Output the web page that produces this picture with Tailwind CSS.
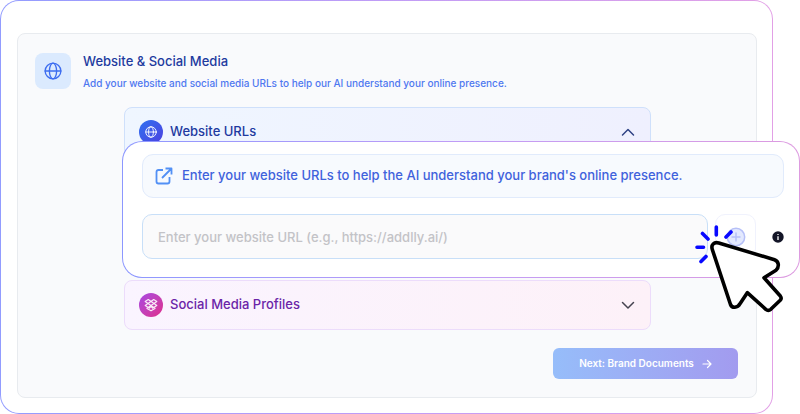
<!DOCTYPE html>
<html lang="en">
<head>
    <meta charset="UTF-8">
    <meta name="viewport" content="width=device-width, initial-scale=1.0">
    <title>Website &amp; Social Media</title>
    <script src="https://cdn.jsdelivr.net/npm/@tailwindcss/browser@4"></script>
</head>
<body class="bg-white font-['Inter',sans-serif] overflow-x-hidden">
    <main class="mr-[27px] rounded-[19px] p-px bg-linear-to-r from-[#929cff] via-[#c09cf6] to-[#e2a0e6]">
        <div class="rounded-[18px] bg-white pt-8 pr-[15px] pb-[15px] pl-4">
            <section class="rounded-lg border border-[#e8ebef] bg-[#f9fafc] pt-[19px] pr-4 pb-[18px] pl-[17px]">
                <!-- Heading -->
                <div class="flex items-start gap-3">
                    <div class="flex size-9 items-center justify-center rounded-lg bg-blue-100">
                        <svg class="size-[18px] text-[#3d6df0]" viewBox="0 0 24 24" fill="none" stroke="currentColor" stroke-width="1.8" stroke-linecap="round" stroke-linejoin="round" aria-hidden="true">
                            <circle cx="12" cy="12" r="10.5" />
                            <ellipse cx="12" cy="12" rx="4.8" ry="10.5" />
                            <path d="M1.5 12h21" />
                        </svg>
                    </div>
                    <div>
                        <h1 class="text-[13px] leading-4 font-medium text-[#1e3a9f]">Website &amp; Social Media</h1>
                        <p class="mt-[6px] text-[10px] leading-4 font-medium text-[#4f78f0]">Add your website and social media URLs to help our AI understand your online presence.</p>
                    </div>
                </div>

                <div class="mx-auto mt-4 max-w-[527px]">
                    <button type="button" aria-expanded="true" class="flex h-[50px] w-full items-center gap-[7px] rounded-lg border border-[#cfe0fb] bg-linear-to-r from-[#eff6ff] to-[#eff0fe] px-[14px]">
                        <span class="flex size-6 items-center justify-center rounded-full bg-linear-to-br from-[#2b70f0] to-[#4a3fe0]">
                            <svg class="size-3 text-white/90" viewBox="0 0 24 24" fill="none" stroke="currentColor" stroke-width="2" stroke-linecap="round" aria-hidden="true">
                                <circle cx="12" cy="12" r="10.5" />
                                <ellipse cx="12" cy="12" rx="4.8" ry="10.5" />
                                <path d="M1.5 12h21" />
                            </svg>
                        </span>
                        <span class="flex-1 text-left text-[13px] font-medium text-[#1e3a9f]">Website URLs</span>
                        <svg class="size-4 text-[#2f4384]" viewBox="0 0 16 16" fill="none" stroke="currentColor" stroke-width="1.5" stroke-linecap="round" stroke-linejoin="round" aria-hidden="true">
                            <path d="M2.500 11 8 5.500 13.500 11" />
                        </svg>
                    </button>

                    <!-- Expanded panel, wider than the accordion -->
                    <div class="relative z-10 -mt-4 -mr-[149px] -ml-0.5 rounded-[20px] bg-linear-to-r from-[#8c97ff] via-[#c09cf6] to-[#dd9be0] p-px">
                        <div class="rounded-[19px] bg-white pt-3 pr-[15px] pb-[18px] pl-[19px]">
                            <div class="flex h-11 items-center gap-[9px] rounded-[11px] border border-[#e1ebfc] bg-[#f7fafe] px-3">
                                <svg class="size-[18px] text-[#5290f5]" viewBox="0 0 18 18" fill="none" stroke="currentColor" stroke-width="1.8" stroke-linejoin="round" aria-hidden="true">
                                    <path d="M8 3H3.500Q1.500 3 1.500 5v9.500q0 2 2 2H12.500q2 0 2-2V10" />
                                    <path d="M10.500 1.500H16.500V7.500M16.500 1.500 7 11" />
                                </svg>
                                <p class="text-[13px] font-medium text-[#3f62dc]">Enter your website URLs to help the AI understand your brand's online presence.</p>
                            </div>
                            <div class="mt-4 flex items-center">
                                <input type="url" aria-label="Website URL" placeholder="Enter your website URL (e.g., https://addlly.ai/)" class="h-[45px] min-w-0 flex-1 rounded-[10px] border border-[#c8dff8] bg-[#fafafb] px-[15px] text-[13px] font-medium placeholder:text-[#c3c3c7]">
                                <button type="button" aria-label="Add URL" class="ml-[7px] flex h-[45px] w-[41px] items-center justify-center rounded-[10px] border border-[#f0f2fd] bg-white">
                                    <svg class="size-5" viewBox="0 0 20 20" fill="none" stroke="#b6c0f8" stroke-width="1.5" stroke-linecap="round" aria-hidden="true">
                                        <circle cx="10" cy="10" r="8.700" fill="#e3e9fe" />
                                        <path d="M10 6v8M6 10h8" />
                                    </svg>
                                </button>
                                <svg class="ml-4 size-3" viewBox="0 0 12 12" role="img" aria-label="Info">
                                    <circle cx="6" cy="6" r="5.700" fill="#131527" />
                                    <path d="M6 5.300V9M6 2.900v1.200" stroke="#fff" stroke-width="1.300" />
                                </svg>
                            </div>
                        </div>
                        <!-- Click cursor -->
                        <svg class="pointer-events-none absolute top-[79px] right-[10px] h-[95px] w-[100px]" viewBox="690 220 100 95" fill="none" stroke-width="3.600" stroke-linecap="round" stroke-linejoin="round" aria-hidden="true">
                            <path d="M718.800 243 774.500 259.700C779 261.200 779.500 267 776 270.300L764 277.700 780.300 296Q782 298.300 780.200 300.300L770.800 309.300Q768.300 311.300 765.800 309.300L747.300 292.700 740 303.700C737.500 308.300 732 308.300 730.500 304.500L712.300 249.500C710.800 244.700 714 241.700 718.800 243Z" fill="#fff" stroke="#000" />
                            <path d="M716.300 227V235M702.500 233.500 708 239M697 247.300H703.500M701 261.500 706 256.500M726 237 731 232" stroke="#0808ff" />
                        </svg>
                    </div>

                    <button type="button" aria-expanded="false" class="mt-0.5 flex h-[50px] w-full items-center gap-[7px] rounded-lg border border-[#ecdcfb] bg-linear-to-r from-[#faf4ff] to-[#fdf1f8] px-[14px]">
                        <span class="flex size-6 items-center justify-center rounded-full bg-linear-to-br from-[#a745e4] to-[#e0288a]">
                            <svg class="size-[14px] text-white/90" viewBox="0 0 14 14" fill="none" stroke="currentColor" stroke-width="1.2" stroke-linejoin="round" aria-hidden="true">
                                <path d="M4.300 1.500 7 3.500 4 5.500 1.200 3.500ZM9.700 1.500 12.800 3.500 10 5.500 7 3.500ZM1.200 7.500 4 5.500 7 7.500 4.300 9.500ZM12.800 7.500 10 5.500 7 7.500 9.700 9.500ZM3 9.800V10.500L7 12.800 11 10.500V9.800M7 8.500 4.800 10.500M7 8.500 9.200 10.500" />
                            </svg>
                        </span>
                        <span class="flex-1 text-left text-[13px] font-medium text-[#6b25a8]">Social Media Profiles</span>
                        <svg class="size-4 text-[#45434f]" viewBox="0 0 16 16" fill="none" stroke="currentColor" stroke-width="1.5" stroke-linecap="round" stroke-linejoin="round" aria-hidden="true">
                            <path d="M2.500 5.500 8 11 13.500 5.500" />
                        </svg>
                    </button>
                </div>

                <div class="mt-[18px] flex justify-end pr-0.5">
                    <button type="button" class="flex h-[31px] w-[185px] items-center justify-center gap-2 rounded-md bg-linear-to-r from-[#96bdfa] to-[#a29bef] text-[10px] font-semibold text-white">
                        Next: Brand Documents
                        <svg class="size-[10px]" viewBox="0 0 10 10" fill="none" stroke="currentColor" stroke-width="1.200" stroke-linecap="round" stroke-linejoin="round" aria-hidden="true">
                            <path d="M1 5h8M5.500 1.500 9 5 5.500 8.500" />
                        </svg>
                    </button>
                </div>
            </section>
        </div>
    </main>
</body>
</html>
